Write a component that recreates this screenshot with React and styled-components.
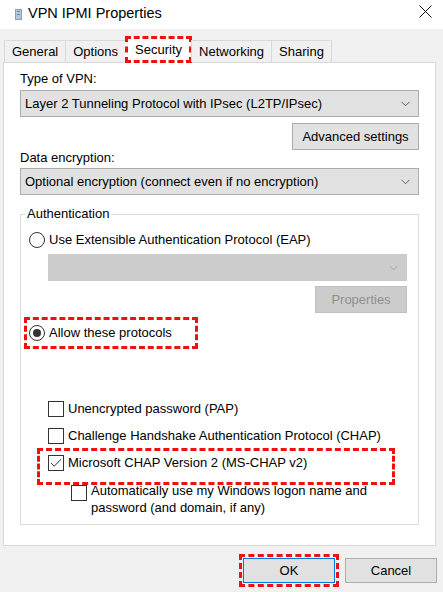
import React from 'react';
import styled, { createGlobalStyle } from 'styled-components';

const GlobalStyle = createGlobalStyle`
  html, body {
    margin: 0;
    padding: 0;
  }

  body {
    width: 443px;
    height: 592px;
    overflow: hidden;
    background: #f0f0f0;
    font-family: "Liberation Sans", Arial, sans-serif;
    font-size: 13px;
    color: #000;
  }

  * {
    box-sizing: border-box;
  }
`;

const ANNOTATION = '#ef1010';

const Window = styled.div`
  width: 443px;
  height: 592px;
  display: flex;
  flex-direction: column;
  background: #f0f0f0;
`;

const TitleBar = styled.div`
  height: 29px;
  flex-shrink: 0;
  display: flex;
  align-items: center;
  padding: 0 11px 0 15px;
  background: #fff;
`;

const Title = styled.div`
  flex: 1;
  margin: -3px 0 0 6px;
  font-size: 14.5px;
  line-height: 18px;
  color: #000;
`;

const CloseGlyph = styled.svg`
  margin-top: -6px;
  display: block;
`;

const TabStrip = styled.div`
  display: flex;
  align-items: flex-end;
  height: 27px;
  margin: 7px 0 -1px;
  padding-left: 4px;
  position: relative;
  z-index: 1;
`;

const Tab = styled.div`
  display: flex;
  align-items: center;
  height: ${p => (p.$active ? 27 : 22)}px;
  padding: 0 7px;
  margin: 0 0 ${p => (p.$active ? 0 : 1)}px -1px;
  border: ${p => (p.$active ? `3px dashed ${ANNOTATION}` : '1px solid #d9d9d9')};
  border-bottom: ${p => (p.$active ? `3px dashed ${ANNOTATION}` : 'none')};
  background: ${p => (p.$active ? '#fff' : '#f0f0f0')};
  line-height: 16px;
  white-space: nowrap;

  &:first-child {
    margin-left: 0;
  }
`;

const Panel = styled.div`
  display: flex;
  flex-direction: column;
  margin: 0 7px 0 3px;
  padding: 8px 16px 20px;
  background: #fff;
  border: 1px solid #d9d9d9;
`;

const FieldLabel = styled.div`
  line-height: 16px;
  margin-top: ${p => p.$top || 0}px;
`;

const Select = styled.div`
  display: flex;
  align-items: center;
  justify-content: space-between;
  height: 27px;
  margin-top: ${p => p.$top || 0}px;
  margin-left: ${p => p.$indent || 0}px;
  padding: 0 8px 0 4px;
  background: ${p => (p.$disabled ? '#cccccc' : '#e1e1e1')};
  border: 1px solid ${p => (p.$disabled ? '#cccccc' : '#adadad')};
  white-space: nowrap;
`;

const Chevron = ({ color }) => (
  <svg width="9" height="6" viewBox="0 0 9 6">
    <path d="M0.5 0.8 L4.5 4.8 L8.5 0.8" fill="none" stroke={color} strokeWidth="1" />
  </svg>
);

const Button = styled.div`
  display: flex;
  align-items: center;
  justify-content: center;
  width: ${p => p.$width}px;
  height: ${p => p.$height || 27}px;
  margin-top: ${p => p.$top || 0}px;
  align-self: ${p => (p.$right ? 'flex-end' : 'auto')};
  background: ${p => (p.$disabled ? '#cccccc' : '#e1e1e1')};
  border: 1px solid ${p => (p.$default ? '#0078d7' : p.$disabled ? '#bfbfbf' : '#adadad')};
  color: ${p => (p.$disabled ? '#8f8f8f' : '#000')};
`;

const Group = styled.fieldset`
  display: flex;
  flex-direction: column;
  min-width: 0;
  margin: 11px 0 0;
  padding: 0 11px 8px 8px;
  border: 1px solid #dcdcdc;
`;

const Legend = styled.legend`
  margin-left: -4px;
  padding: 0 2px;
  line-height: 16px;
`;

const OptionRow = styled.label`
  display: flex;
  align-items: ${p => (p.$wrap ? 'flex-start' : 'center')};
  gap: 4px;
  margin-top: ${p => p.$top || 0}px;
  margin-left: ${p => p.$indent || 0}px;
  line-height: ${p => (p.$wrap ? 17 : 16)}px;
`;

const RadioCircle = styled.span`
  display: grid;
  place-items: center;
  flex-shrink: 0;
  width: 16px;
  height: 16px;
  border: 1px solid #333;
  border-radius: 50%;
  background: #fff;

  &::after {
    content: '';
    width: 8px;
    height: 8px;
    border-radius: 50%;
    background: ${p => (p.$checked ? '#333' : 'transparent')};
  }
`;

const CheckBox = styled.span`
  display: grid;
  place-items: center;
  flex-shrink: 0;
  width: 16px;
  height: 16px;
  margin-top: ${p => p.$top || 0}px;
  border: 1px solid #333;
  background: #fff;
`;

const Highlight = styled.div`
  display: flex;
  flex-direction: column;
  width: ${p => (p.$width ? `${p.$width}px` : 'auto')};
  margin: ${p => p.$margin || 0};
  padding: ${p => p.$padding || 0};
  border: 3px dashed ${ANNOTATION};
`;

const Footer = styled.div`
  display: flex;
  justify-content: flex-end;
  align-items: center;
  gap: 6px;
  padding: 8px 6px 0 0;
`;

const Radio = ({ checked, children, top }) => (
  <OptionRow $top={top}>
    <RadioCircle $checked={checked} />
    <span>{children}</span>
  </OptionRow>
);

const Check = ({ checked, children, top, indent, wrap }) => (
  <OptionRow $top={top} $indent={indent} $wrap={wrap}>
    <CheckBox $top={wrap ? 3 : 0}>
      {checked && (
        <svg width="12" height="10" viewBox="0 0 12 10">
          <path d="M1 5 L4.2 8.3 L11 1.2" fill="none" stroke="#333" strokeWidth="1" />
        </svg>
      )}
    </CheckBox>
    <span>{children}</span>
  </OptionRow>
);

const App = () => {
  const tabs = ['General', 'Options', 'Security', 'Networking', 'Sharing'];

  return (
    <>
      <GlobalStyle />
      <Window>
        <TitleBar>
          <svg width="7" height="11" viewBox="0 0 7 11">
            <rect x="0.5" y="0.5" width="6" height="10" fill="#b4c6d8" stroke="#8aa0b8" />
            <rect x="2" y="2" width="3" height="1" fill="#6f87a3" />
            <rect x="2" y="5" width="3" height="1" fill="#6f87a3" />
          </svg>
          <Title>VPN IPMI Properties</Title>
          <CloseGlyph width="13" height="13" viewBox="0 0 13 13">
            <path d="M0.5 0.5 L12.5 12.5 M12.5 0.5 L0.5 12.5" stroke="#111" strokeWidth="1" />
          </CloseGlyph>
        </TitleBar>

        <TabStrip>
          {tabs.map(t => (
            <Tab key={t} $active={t === 'Security'}>
              {t}
            </Tab>
          ))}
        </TabStrip>

        <Panel>
          <FieldLabel>Type of VPN:</FieldLabel>
          <Select $top={3}>
            <span>Layer 2 Tunneling Protocol with IPsec (L2TP/IPsec)</span>
            <Chevron color="#606060" />
          </Select>
          <Button $width={127} $top={6} $right>
            Advanced settings
          </Button>

          <FieldLabel>Data encryption:</FieldLabel>
          <Select $top={2}>
            <span>Optional encryption (connect even if no encryption)</span>
            <Chevron color="#606060" />
          </Select>

          <Group>
            <Legend>Authentication</Legend>
            <Radio top={10}>Use Extensible Authentication Protocol (EAP)</Radio>
            <Select $top={6} $indent={19} $disabled>
              <span />
              <Chevron color="#a6a6a6" />
            </Select>
            <Button $width={92} $top={5} $right $disabled>
              Properties
            </Button>

            <Highlight $width={174} $margin="4px 0 0 -5px" $padding="5px 0 5px 2px">
              <Radio checked>Allow these protocols</Radio>
            </Highlight>

            <Check top={52} indent={19}>
              Unencrypted password (PAP)
            </Check>
            <Check top={11} indent={19}>
              Challenge Handshake Authentication Protocol (CHAP)
            </Check>

            <Highlight $width={358} $margin="4px 0 0 8px" $padding="4px 0 11px 8px">
              <Check checked>Microsoft CHAP Version 2 (MS-CHAP v2)</Check>
            </Highlight>

            <Check top={-3} indent={42} wrap>
              Automatically use my Windows logon name and
              <br />
              password (and domain, if any)
            </Check>
          </Group>
        </Panel>

        <Footer>
          <Highlight $padding="1px">
            <Button $width={92} $height={25} $default>
              OK
            </Button>
          </Highlight>
          <Button $width={92} $height={25}>
            Cancel
          </Button>
        </Footer>
      </Window>
    </>
  );
};

export default App;
